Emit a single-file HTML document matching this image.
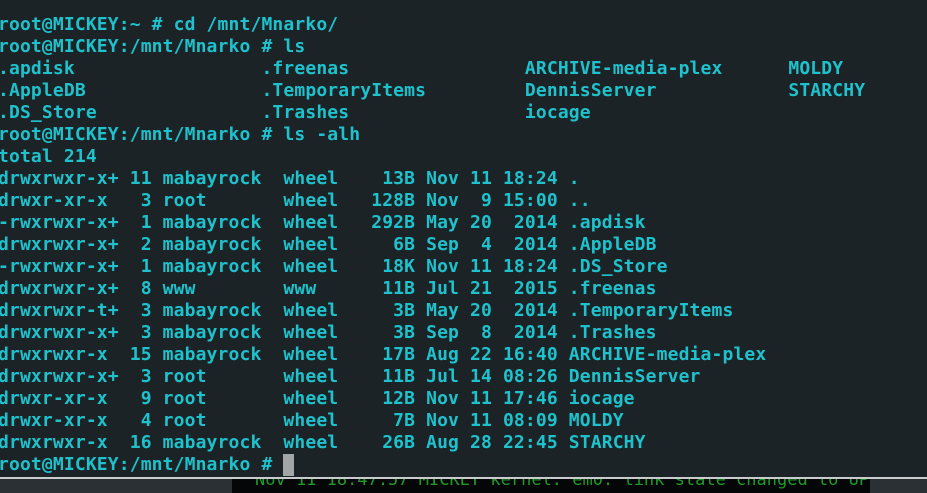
<!DOCTYPE html>
<html><head><style>
body{margin:0;width:927px;height:493px;overflow:hidden;background:#1b2326;position:relative}
pre{position:absolute;left:-2px;top:14px;margin:0;font-family:"DejaVu Sans Mono","Liberation Mono",monospace;font-weight:bold;font-size:18px;line-height:22px;letter-spacing:0.14px;color:#1fc2cc}
.cur{display:inline-block;width:11px;height:22px;background:#a3a6a6;vertical-align:top}
.bar{position:absolute;left:0;top:477px;width:927px;height:2px;background:#c8cccc}
.bot{position:absolute;left:0;top:479px;width:927px;height:14px;background:#2a3033}
.blk{position:absolute;left:232px;top:479px;width:638px;height:14px;background:#050607;overflow:hidden}
.blk span{position:absolute;left:23px;top:-9px;font-family:"DejaVu Sans Mono",monospace;font-size:17px;color:#1f9a2a;white-space:pre}
</style></head><body>
<pre>root@MICKEY:~ # cd /mnt/Mnarko/
root@MICKEY:/mnt/Mnarko # ls
.apdisk                 .freenas                ARCHIVE-media-plex      MOLDY
.AppleDB                .TemporaryItems         DennisServer            STARCHY
.DS_Store               .Trashes                iocage
root@MICKEY:/mnt/Mnarko # ls -alh
total 214
drwxrwxr-x+ 11 mabayrock  wheel    13B Nov 11 18:24 .
drwxr-xr-x   3 root       wheel   128B Nov  9 15:00 ..
-rwxrwxr-x+  1 mabayrock  wheel   292B May 20  2014 .apdisk
drwxrwxr-x+  2 mabayrock  wheel     6B Sep  4  2014 .AppleDB
-rwxrwxr-x+  1 mabayrock  wheel    18K Nov 11 18:24 .DS_Store
drwxrwxr-x+  8 www        www      11B Jul 21  2015 .freenas
drwxrwxr-t+  3 mabayrock  wheel     3B May 20  2014 .TemporaryItems
drwxrwxr-x+  3 mabayrock  wheel     3B Sep  8  2014 .Trashes
drwxrwxr-x  15 mabayrock  wheel    17B Aug 22 16:40 ARCHIVE-media-plex
drwxrwxr-x+  3 root       wheel    11B Jul 14 08:26 DennisServer
drwxr-xr-x   9 root       wheel    12B Nov 11 17:46 iocage
drwxr-xr-x   4 root       wheel     7B Nov 11 08:09 MOLDY
drwxrwxr-x  16 mabayrock  wheel    26B Aug 28 22:45 STARCHY
root@MICKEY:/mnt/Mnarko # <span class="cur"></span></pre>
<div class="bar"></div>
<div class="bot"></div>
<div class="blk"><span>Nov 11 18:47:57 MICKEY kernel: em0: link state changed to UP</span></div>
</body></html>
